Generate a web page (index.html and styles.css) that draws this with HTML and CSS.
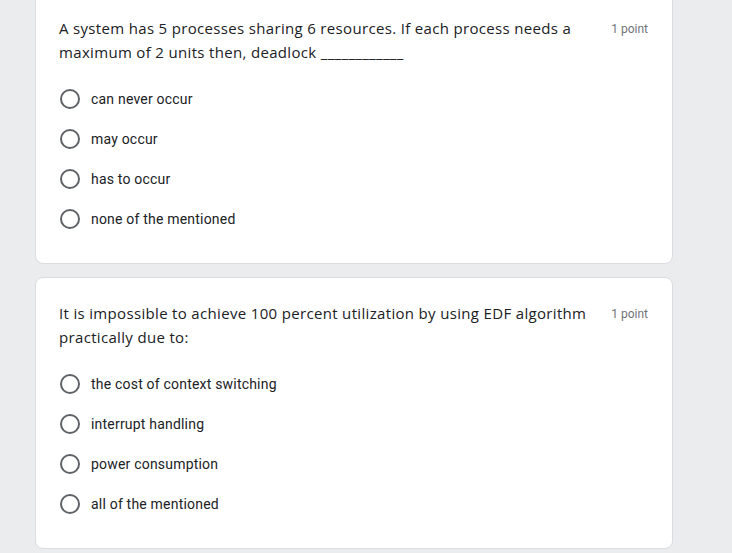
FILE: index.html
```html
<!DOCTYPE html>
<html>
<head>
<meta charset="utf-8">
<link rel="stylesheet" href="styles.css">
</head>
<body>
<div class="page">
  <div class="card first">
    <div class="head">
      <div class="question">A system has 5 processes sharing 6 resources. If each process needs a maximum of 2 units then, deadlock ____________</div>
      <div class="points">1 point</div>
    </div>
    <div class="options">
      <div class="option"><span class="radio"></span><span class="label">can never occur</span></div>
      <div class="option"><span class="radio"></span><span class="label">may occur</span></div>
      <div class="option"><span class="radio"></span><span class="label">has to occur</span></div>
      <div class="option"><span class="radio"></span><span class="label">none of the mentioned</span></div>
    </div>
  </div>
  <div class="card">
    <div class="head">
      <div class="question">It is impossible to achieve 100 percent utilization by using EDF algorithm practically due to:</div>
      <div class="points">1 point</div>
    </div>
    <div class="options">
      <div class="option"><span class="radio"></span><span class="label">the cost of context switching</span></div>
      <div class="option"><span class="radio"></span><span class="label">interrupt handling</span></div>
      <div class="option"><span class="radio"></span><span class="label">power consumption</span></div>
      <div class="option"><span class="radio"></span><span class="label">all of the mentioned</span></div>
    </div>
  </div>
</div>
</body>
</html>
```
FILE: styles.css
```css
html, body {
  margin: 0;
  padding: 0;
  background: #ebecee;
  height: 100%;
  overflow: hidden;
}
.page {
  padding-left: 35px;
  width: 638px;
  display: flex;
  flex-direction: column;
  gap: 13px;
}
.card {
  background: #ffffff;
  border: 1px solid #dadce0;
  border-radius: 8px;
  padding: 23px 24px 24px 23px;
}
.card.first {
  margin-top: -8px;
}
.head {
  display: flex;
  align-items: flex-start;
  gap: 18px;
}
.question {
  flex: 1;
  font-family: "Open Sans", "Noto Sans", sans-serif;
  font-size: 15px;
  letter-spacing: 0.33px;
  line-height: 24px;
  color: #202124;
}
.points {
  font-family: Roboto, "Liberation Sans", sans-serif;
  font-size: 12px;
  line-height: 26px;
  color: #70757a;
  white-space: nowrap;
}
.options {
  margin-top: 15px;
  display: flex;
  flex-direction: column;
}
.option {
  height: 40px;
  display: flex;
  align-items: center;
  gap: 11px;
}
.radio {
  width: 16px;
  height: 16px;
  border: 2px solid #5f6368;
  border-radius: 50%;
  flex: none;
  margin-left: 1px;
}
.label {
  font-family: Roboto, "Liberation Sans", sans-serif;
  font-size: 14px;
  letter-spacing: 0.2px;
  color: #202124;
}
```
